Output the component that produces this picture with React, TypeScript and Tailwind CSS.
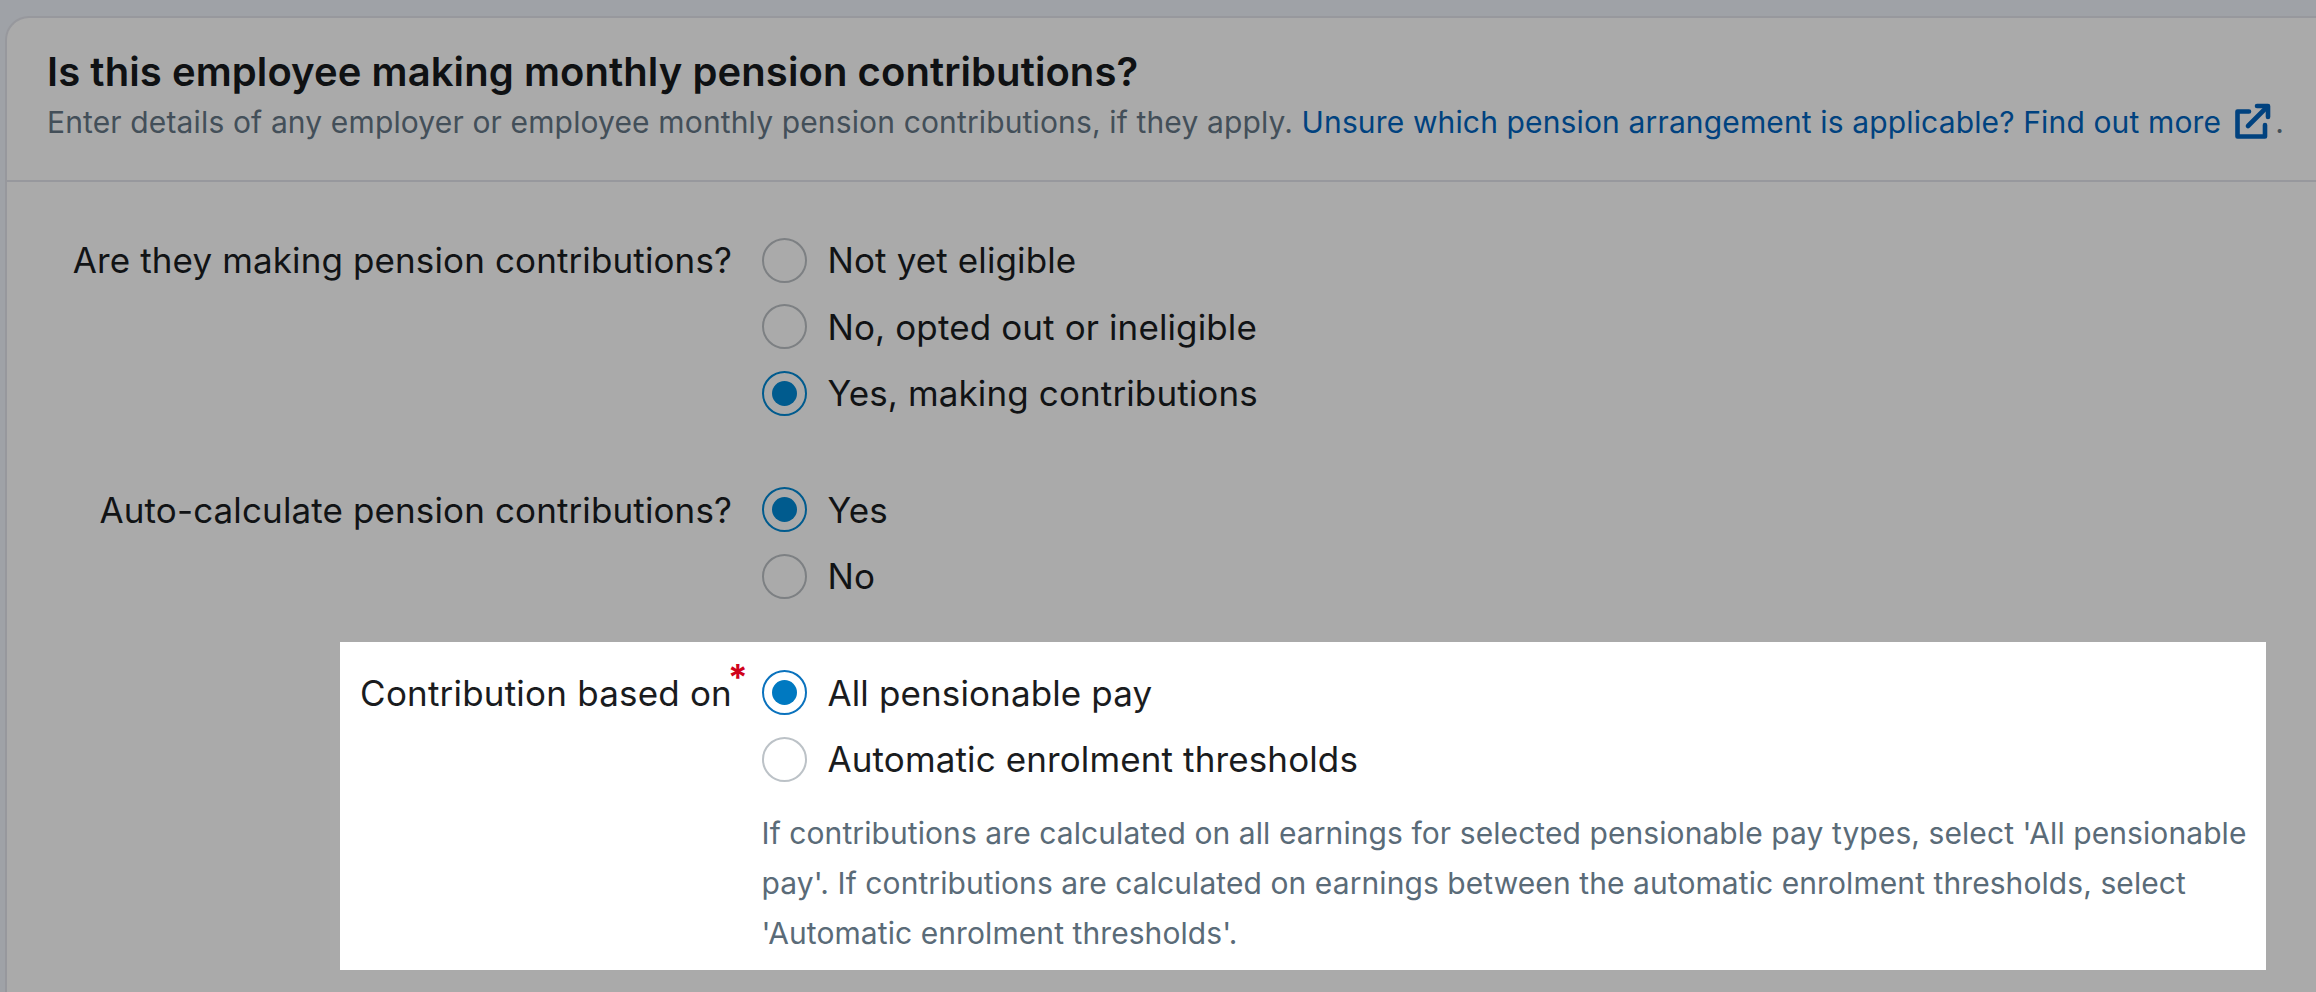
const font = "font-['Inter','Liberation_Sans',sans-serif]";

function ExternalIcon() {
  return (
    <svg viewBox="0 0 36 36" className="inline-block w-[36px] h-[36px] ml-[14px] align-[-6px]" fill="none" stroke="#00427f" strokeWidth="4.6" strokeLinecap="round" strokeLinejoin="round">
      <path d="M14 8.5H2.5V33.5H30V22" />
      <path d="M13 23 32 4" />
      <path d="M22 3H33V14" />
    </svg>
  );
}

function Radio({ label, checked, light }: { label: string; checked?: boolean; light?: boolean }) {
  const ring = light
    ? checked
      ? "border-[#0a72bd]"
      : "border-[#bcc2c7]"
    : checked
      ? "border-[#005b8e]"
      : "border-[#7d8083]";
  const dot = light ? "bg-[#0079c1]" : "bg-[#005b8e]";
  return (
    <div className="flex items-center h-[66.5px]">
      <span className={`flex items-center justify-center w-[45px] h-[45px] rounded-full border-2 ${ring}`}>
        {checked && <span className={`w-[25px] h-[25px] rounded-full ${dot}`} />}
      </span>
      <span className={`ml-[21px] text-[35px] tracking-[0.12px] ${light ? "text-[#1a1c1e]" : "text-[#111315]"}`}>{label}</span>
    </div>
  );
}

function Field({ label, children }: { label: string; children: React.ReactNode }) {
  return (
    <div className="flex">
      <div className="w-[725px] h-[66.5px] flex items-center justify-end text-[35px] tracking-[0.12px] text-[#111315] whitespace-nowrap">
        {label}
      </div>
      <div className="ml-[29.5px]">{children}</div>
    </div>
  );
}

export default function App() {
  return (
    <div className={`w-[2316px] h-[992px] overflow-hidden bg-[#9fa2a7] pt-[16px] pl-[5px] ${font}`}>
      <div className="h-[976px] bg-[#aaaaaa] border-t-2 border-l-2 border-[#97989d] rounded-tl-[24px]">
        <div className="h-[164px] border-b-2 border-[#97989d] pl-[40px] pt-[31px]">
          <h1 className="text-[40px] leading-[46px] font-semibold tracking-[0.08px] text-[#0f1113] whitespace-nowrap">
            Is this employee making monthly pension contributions?
          </h1>
          <p className="mt-[5px] text-[30px] leading-[44px] tracking-[0.14px] text-[#434f59] whitespace-nowrap">
            Enter details of any employer or employee monthly pension contributions, if they apply.{" "}
            <a className="text-[#00427f]">
              Unsure which pension arrangement is applicable? Find out more
              <ExternalIcon />
            </a>
            <span className="ml-[4px]">.</span>
          </p>
        </div>

        <div className="pt-[45px]">
          <Field label="Are they making pension contributions?">
            <Radio label="Not yet eligible" />
            <Radio label="No, opted out or ineligible" />
            <Radio label="Yes, making contributions" checked />
          </Field>
          <div className="mt-[50px]">
            <Field label="Auto-calculate pension contributions?">
              <Radio label="Yes" checked />
              <Radio label="No" />
            </Field>
          </div>

          <div className="mt-[32px] ml-[333px] w-[1926px] h-[328px] bg-white flex pt-[18px]">
            <div className="relative w-[392px] h-[66.5px] flex items-center justify-end text-[35px] tracking-[0.2px] text-[#1a1c1e] whitespace-nowrap">
              Contribution based on
              <span className="absolute right-[-16px] top-[-1px] text-[36px] leading-none font-bold text-[#d0021b]">*</span>
            </div>
            <div className="ml-[29.5px]">
              <Radio label="All pensionable pay" checked light />
              <Radio label="Automatic enrolment thresholds" light />
              <p className="w-[1500px] mt-[15px] text-[30px] leading-[50px] tracking-[0.08px] text-[#5a6b78]">
                If contributions are calculated on all earnings for selected pensionable pay types, select 'All pensionable pay'. If contributions are calculated on earnings between the automatic enrolment thresholds, select 'Automatic enrolment thresholds'.
              </p>
            </div>
          </div>
        </div>
      </div>
    </div>
  );
}
